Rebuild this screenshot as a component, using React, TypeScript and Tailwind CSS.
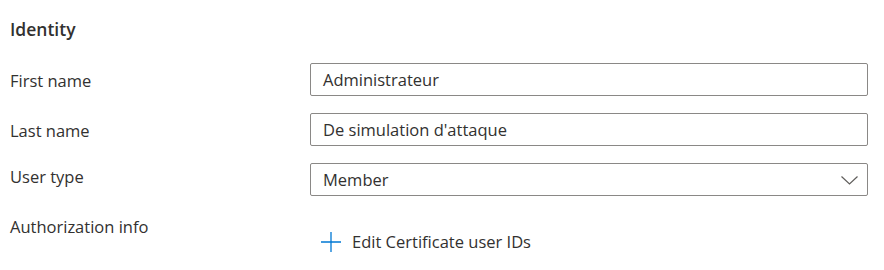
export default function App() {
  const rows = [
    { label: "First name", value: "Administrateur" },
    { label: "Last name", value: "De simulation d'attaque" },
  ];

  return (
    <div className="w-[884px] h-[270px] bg-white text-[#323130] font-['Segoe_UI','Open_Sans',sans-serif] text-[16.5px]">
      <div className="pl-[10px] pt-[18px]">
        <h2 className="font-semibold text-[17.5px] leading-[22px]">Identity</h2>

        <div className="mt-[23px] flex flex-col">
          {rows.map((r) => (
            <div key={r.label} className="flex items-center h-[33px] mb-[17px]">
              <div className="w-[300px] pt-[3px]">{r.label}</div>
              <div className="w-[558px] h-[33px] border border-[#8a8886] rounded-[2px] flex items-center px-[12px] pt-[2px]">
                {r.value}
              </div>
            </div>
          ))}

          {/* User type */}
          <div className="flex items-center h-[33px]">
            <div className="w-[300px] -mt-[5px]">User type</div>
            <div className="w-[558px] h-[33px] border border-[#8a8886] rounded-[2px] flex items-center justify-between pl-[12px] pr-[9px] pt-[2px]">
              <span>Member</span>
              <svg width="17" height="9" viewBox="0 0 17 9" fill="none">
                <path d="M0.5 0.5 L8.5 8 L16.5 0.5" stroke="#605e5c" strokeWidth="1.2" />
              </svg>
            </div>
          </div>

          {/* Authorization info */}
          <div className="flex mt-[19px]">
            <div className="w-[300px]">Authorization info</div>
            <button className="flex items-center gap-[10px] mt-[15px] pl-[10px]">
              <svg width="22" height="22" viewBox="0 0 22 22" fill="none">
                <path d="M11 1 V21 M1 11 H21" stroke="#0078d4" strokeWidth="1.3" />
              </svg>
              <span>Edit Certificate user IDs</span>
            </button>
          </div>
        </div>
      </div>
    </div>
  );
}
